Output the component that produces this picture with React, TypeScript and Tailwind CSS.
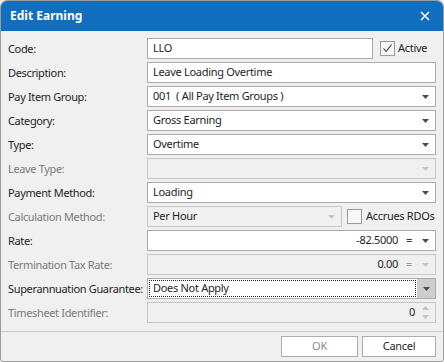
import React from 'react'

const font = { fontFamily: '"Segoe UI", "Noto Sans", "Open Sans", sans-serif' }

function Arrow({ disabled }: { disabled?: boolean }) {
  return (
    <svg width="7" height="4" viewBox="0 0 7 4" className="shrink-0">
      <path d="M0 0H7L3.5 4Z" fill={disabled ? '#c4c4c4' : '#4a4a4a'} />
    </svg>
  )
}

function Label({ text, disabled }: { text: string; disabled?: boolean }) {
  return (
    <div
      className={`w-[139px] shrink-0 whitespace-nowrap text-[11px] tracking-[-0.35px] leading-[20px] ${
        disabled ? 'text-[#7a7a7a]' : 'text-[#1e1e1e]'
      }`}
    >
      {text}
    </div>
  )
}

function Box({
  children,
  disabled,
  className = '',
}: {
  children?: React.ReactNode
  disabled?: boolean
  className?: string
}) {
  return (
    <div
      className={`h-[21px] flex items-center border text-[11px] tracking-[-0.3px] whitespace-nowrap ${
        disabled ? 'bg-[#f0f0f0] border-[#c6c6c6]' : 'bg-white border-[#ababab]'
      } ${className}`}
    >
      {children}
    </div>
  )
}

function Select({ value, disabled, className = 'flex-1' }: { value?: string; disabled?: boolean; className?: string }) {
  return (
    <Box disabled={disabled} className={className}>
      <span className="flex-1 pl-[5px] text-[#1e1e1e] whitespace-pre truncate">{value}</span>
      <span className="pr-[6px] pl-1 flex items-center">
        <Arrow disabled={disabled} />
      </span>
    </Box>
  )
}

function Row({ label, disabled, children }: { label: string; disabled?: boolean; children: React.ReactNode }) {
  return (
    <div className="flex items-center h-[21px]">
      <Label text={label} disabled={disabled} />
      <div className="flex-1 flex items-center">{children}</div>
    </div>
  )
}

function Check({ checked }: { checked?: boolean }) {
  return (
    <div className="w-[15px] h-[15px] shrink-0 border border-[#9a9a9a] bg-[#f7f7f7] flex items-center justify-center">
      {checked && (
        <svg width="11" height="11" viewBox="0 0 11 11">
          <path d="M1.5 5.5L4.2 8.5L9.5 1.5" stroke="#333" strokeWidth="1.1" fill="none" />
        </svg>
      )}
    </div>
  )
}

export default function App() {
  return (
    <div style={font} className="w-[444px] h-[362px] bg-[#f0f0f0]">
      <div className="w-[444px] h-[362px] flex flex-col border border-[#9c9c9c] rounded-t-[7px] rounded-b-[3px] overflow-hidden">
        {/* Title bar */}
        <div className="h-[30px] shrink-0 bg-[#106ebe] flex items-center justify-between pl-[9px] pr-[13px]">
          <span className="text-white font-bold text-[12px]">Edit Earning</span>
          <svg width="10" height="10" viewBox="0 0 10 10">
            <path d="M1 1L9 9M9 1L1 9" stroke="white" strokeWidth="1.6" />
          </svg>
        </div>

        {/* Form */}
        <div className="flex flex-col gap-[3px] pt-[7px] pl-[7px] pr-[7px]">
          <Row label="Code:">
            <Box className="w-[226px]">
              <span className="pl-[5px] text-[#1e1e1e]">LLO</span>
            </Box>
            <div className="ml-[7px] flex items-center gap-[3px] whitespace-nowrap">
              <Check checked />
              <span className="text-[11px] tracking-[-0.3px] text-[#1e1e1e]">Active</span>
            </div>
          </Row>
          <Row label="Description:">
            <Box className="flex-1">
              <span className="pl-[5px] text-[#1e1e1e]">Leave Loading Overtime</span>
            </Box>
          </Row>
          <Row label="Pay Item Group:">
            <Select value="001  ( All Pay Item Groups )" />
          </Row>
          <Row label="Category:">
            <Select value="Gross Earning" />
          </Row>
          <Row label="Type:">
            <Select value="Overtime" />
          </Row>
          <Row label="Leave Type:" disabled>
            <Select disabled />
          </Row>
          <Row label="Payment Method:">
            <Select value="Loading" />
          </Row>
          <Row label="Calculation Method:" disabled>
            <Select value="Per Hour" disabled className="w-[195px]" />
            <div className="ml-[5px] flex items-center gap-[4px] whitespace-nowrap">
              <Check />
              <span className="text-[11px] tracking-[-0.3px] text-[#1e1e1e]">Accrues RDOs</span>
            </div>
          </Row>
          <Row label="Rate:">
            <Box className="flex-1">
              <span className="flex-1 text-right text-[#1e1e1e]">-82.5000</span>
              <span className="w-[22px] text-center text-[#333]">=</span>
              <span className="pr-[6px] pl-[2px] flex items-center">
                <Arrow />
              </span>
            </Box>
          </Row>
          <Row label="Termination Tax Rate:" disabled>
            <Box disabled className="flex-1">
              <span className="flex-1 text-right text-[#1e1e1e]">0.00</span>
              <span className="w-[22px] text-center text-[#9a9a9a]">=</span>
              <span className="pr-[6px] pl-[2px] flex items-center">
                <Arrow disabled />
              </span>
            </Box>
          </Row>
          <Row label="Superannuation Guarantee:">
            <Box className="flex-1">
              <div className="flex-1 h-full p-[1px]">
                <div className="h-full border border-dotted border-[#222] flex items-center">
                  <span className="pl-[3px] text-[#1e1e1e]">Does Not Apply</span>
                </div>
              </div>
              <div className="w-[18px] h-full bg-[#cdcdcd] flex items-center justify-center">
                <Arrow />
              </div>
            </Box>
          </Row>
          <Row label="Timesheet Identifier:" disabled>
            <Box disabled className="flex-1">
              <span className="flex-1 text-right text-[#1e1e1e]">0</span>
              <span className="w-[20px] flex flex-col items-center gap-[5px]">
                <svg width="7" height="4" viewBox="0 0 7 4">
                  <path d="M0 4H7L3.5 0Z" fill="#c4c4c4" />
                </svg>
                <svg width="7" height="4" viewBox="0 0 7 4">
                  <path d="M0 0H7L3.5 4Z" fill="#c4c4c4" />
                </svg>
              </span>
            </Box>
          </Row>
        </div>

        {/* Footer */}
        <div className="mt-[8px] border-t border-[#c8c8c8] flex-1 flex justify-end items-start gap-[4px] pt-[4px] pr-[7px]">
          <button className="w-[77px] h-[21px] border border-[#adadad] bg-white text-[11px] tracking-[-0.3px] text-[#8a8a8a]">OK</button>
          <button className="w-[74px] h-[21px] border border-[#adadad] bg-white text-[11px] tracking-[-0.3px] text-[#1e1e1e]">Cancel</button>
        </div>
      </div>
    </div>
  )
}
